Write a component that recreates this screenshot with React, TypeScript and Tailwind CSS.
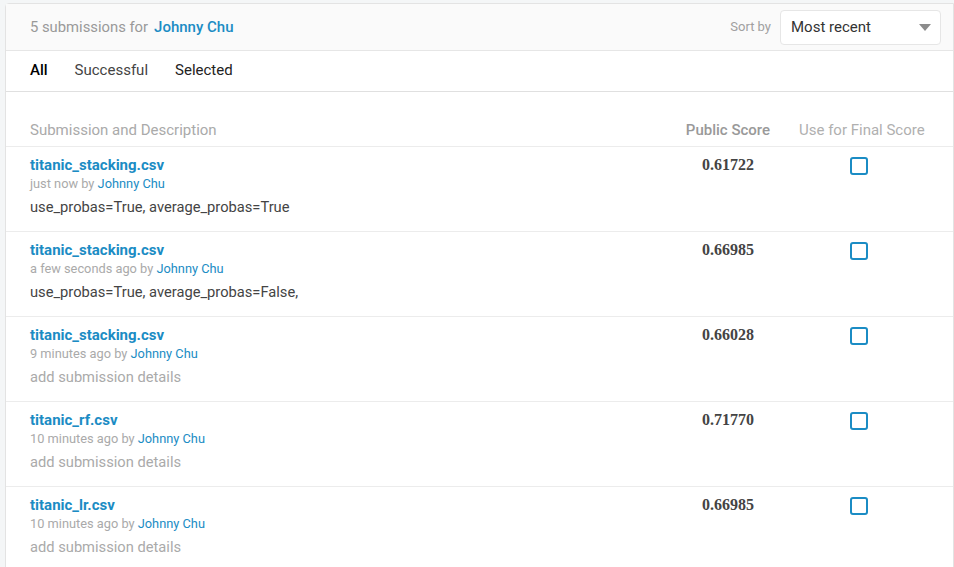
import React from 'react';

interface Submission {
  file: string;
  when: string;
  description?: string;
  score: string;
}

const submissions: Submission[] = [
  { file: 'titanic_stacking.csv', when: 'just now', description: 'use_probas=True, average_probas=True', score: '0.61722' },
  { file: 'titanic_stacking.csv', when: 'a few seconds ago', description: 'use_probas=True, average_probas=False,', score: '0.66985' },
  { file: 'titanic_stacking.csv', when: '9 minutes ago', score: '0.66028' },
  { file: 'titanic_rf.csv', when: '10 minutes ago', score: '0.71770' },
  { file: 'titanic_lr.csv', when: '10 minutes ago', score: '0.66985' },
];

const App: React.FC = () => {
  return (
    <div className="min-h-[567px] bg-[#f4f6f7] pl-[5px] pt-[3px] font-['Roboto',sans-serif] overflow-hidden">
      <div className="bg-white border border-[#e3e3e3] rounded-tl-[4px] w-[949px]">
        {/* Header */}
        <div className="flex items-center justify-between h-[47px] bg-[#fafafa] border-b border-[#e6e6e6] pl-[24px] pr-[12px]">
          <div className="text-[14.8px] text-[#999] flex items-center gap-[6px]">
            <span>5 submissions for</span>
            <span className="text-[#1b8cc4] font-medium text-[15px]">Johnny Chu</span>
          </div>
          <div className="flex items-center gap-[9px]">
            <span className="text-[13px] text-[#a0a0a0]">Sort by</span>
            <div className="w-[161px] h-[35px] bg-white border border-[#e6e6e6] rounded-[4px] flex items-center justify-between pl-[10px] pr-[9px]">
              <span className="text-[15px] text-[#333]">Most recent</span>
              <svg width="12" height="7" viewBox="0 0 12 7"><path d="M0 0h12L6 7z" fill="#8c8c8c" /></svg>
            </div>
          </div>
        </div>

        {/* Tabs */}
        <div className="flex items-center h-[41px] border-b border-[#e0e0e0] pl-[24px] pb-[2px] text-[15px] gap-[27px]">
          <span className="text-black font-medium">All</span>
          <span className="text-[#444]">Successful</span>
          <span className="text-[#222]">Selected</span>
        </div>

        {/* Table header */}
        <div className="flex items-end h-[55px] border-b border-[#ececec] pl-[24px] pb-[7px] text-[15px] leading-[18px]">
          <div className="flex-1 text-[#aaa]">Submission and Description</div>
          <div className="w-[100px] text-right text-[#999] font-medium">Public Score</div>
          <div className="w-[183px] pl-[29px] text-[#b0b0b0]">Use for Final Score</div>
        </div>

        {/* Rows */}
        {submissions.map((s, i) => (
          <div key={i} className="flex h-[85px] border-b border-[#ececec] pl-[24px] pt-[9px]">
            <div className="flex-1">
              <div className="text-[15px] font-bold text-[#1b8cc4] leading-[18px]">{s.file}</div>
              <div className="text-[12.8px] leading-[16px] mt-[2px] text-[#aaa]">
                {s.when} by <span className="text-[#1b8cc4]">Johnny Chu</span>
              </div>
              <div className={`text-[14.7px] leading-[18px] mt-[6px] ${s.description ? 'text-[#444]' : 'text-[#aaa]'}`}>
                {s.description ?? 'add submission details'}
              </div>
            </div>
            <div className="w-[100px] pr-[16px] text-right text-[16px] leading-[18px] font-bold text-[#444] font-['Liberation_Serif',serif]">
              {s.score}
            </div>
            <div className="w-[183px] pl-[80px] pt-[1px]">
              <div className="w-[18px] h-[18px] border-2 border-[#1b8cc4] rounded-[3px]" />
            </div>
          </div>
        ))}
      </div>
    </div>
  );
};

export default App;
